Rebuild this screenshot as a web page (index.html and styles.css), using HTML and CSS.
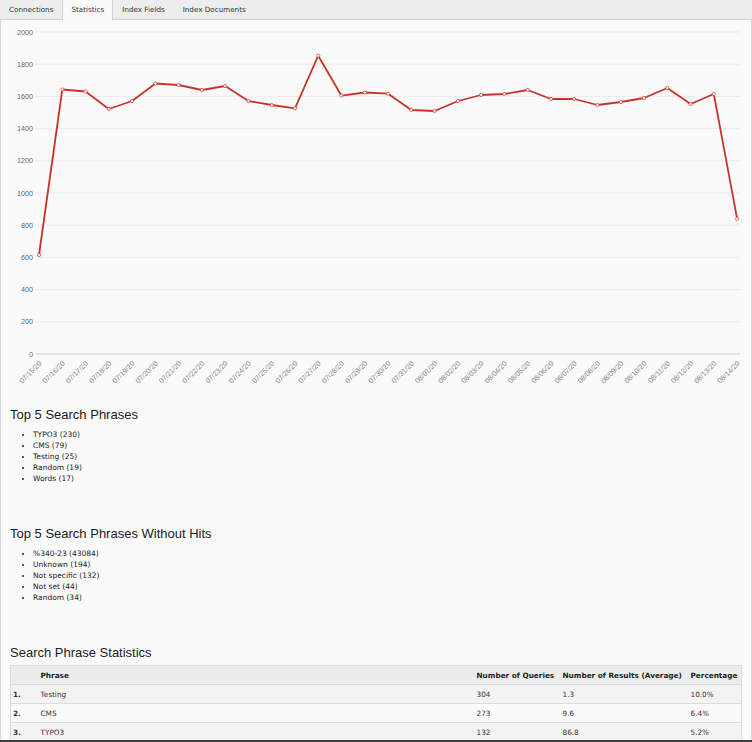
FILE: index.html
```html
<!DOCTYPE html>
<html>
<head>
<meta charset="utf-8">
<link rel="stylesheet" href="styles.css">
</head>
<body>
<div class="tabs">
  <span class="tab">Connections</span>
  <span class="tab active">Statistics</span>
  <span class="tab">Index Fields</span>
  <span class="tab">Index Documents</span>
</div>
<div class="panel">
  <svg class="chart" width="750" height="380" viewBox="1 20 750 380" xmlns="http://www.w3.org/2000/svg">
    <g class="grid">
      <line x1="36" y1="32" x2="740" y2="32"/>
      <line x1="36" y1="64.2" x2="740" y2="64.2"/>
      <line x1="36" y1="96.4" x2="740" y2="96.4"/>
      <line x1="36" y1="128.6" x2="740" y2="128.6"/>
      <line x1="36" y1="160.8" x2="740" y2="160.8"/>
      <line x1="36" y1="193" x2="740" y2="193"/>
      <line x1="36" y1="225.2" x2="740" y2="225.2"/>
      <line x1="36" y1="257.4" x2="740" y2="257.4"/>
      <line x1="36" y1="289.6" x2="740" y2="289.6"/>
      <line x1="36" y1="321.8" x2="740" y2="321.8"/>
    </g>
    <line class="axis" x1="36" y1="354" x2="740" y2="354"/>
    <g class="ylab">
      <text x="33" y="34.5">2000</text>
      <text x="33" y="66.7">1800</text>
      <text x="33" y="98.9">1600</text>
      <text x="33" y="131.1">1400</text>
      <text x="33" y="163.3">1200</text>
      <text x="33" y="195.5">1000</text>
      <text x="33" y="227.7">800</text>
      <text x="33" y="259.9">600</text>
      <text x="33" y="292.1">400</text>
      <text x="33" y="324.3">200</text>
      <text x="33" y="356.5">0</text>
    </g>
    <g class="xlab">
      <text transform="translate(42,364) rotate(-45)">07/15/20</text>
      <text transform="translate(65.3,364) rotate(-45)">07/16/20</text>
      <text transform="translate(88.5,364) rotate(-45)">07/17/20</text>
      <text transform="translate(111.8,364) rotate(-45)">07/18/20</text>
      <text transform="translate(135.1,364) rotate(-45)">07/19/20</text>
      <text transform="translate(158.4,364) rotate(-45)">07/20/20</text>
      <text transform="translate(181.6,364) rotate(-45)">07/21/20</text>
      <text transform="translate(204.9,364) rotate(-45)">07/22/20</text>
      <text transform="translate(228.2,364) rotate(-45)">07/23/20</text>
      <text transform="translate(251.4,364) rotate(-45)">07/24/20</text>
      <text transform="translate(274.7,364) rotate(-45)">07/25/20</text>
      <text transform="translate(298,364) rotate(-45)">07/26/20</text>
      <text transform="translate(321.2,364) rotate(-45)">07/27/20</text>
      <text transform="translate(344.5,364) rotate(-45)">07/28/20</text>
      <text transform="translate(367.8,364) rotate(-45)">07/29/20</text>
      <text transform="translate(391.1,364) rotate(-45)">07/30/20</text>
      <text transform="translate(414.3,364) rotate(-45)">07/31/20</text>
      <text transform="translate(437.6,364) rotate(-45)">08/01/20</text>
      <text transform="translate(460.9,364) rotate(-45)">08/02/20</text>
      <text transform="translate(484.1,364) rotate(-45)">08/03/20</text>
      <text transform="translate(507.4,364) rotate(-45)">08/04/20</text>
      <text transform="translate(530.7,364) rotate(-45)">08/05/20</text>
      <text transform="translate(554,364) rotate(-45)">08/06/20</text>
      <text transform="translate(577.2,364) rotate(-45)">08/07/20</text>
      <text transform="translate(600.5,364) rotate(-45)">08/08/20</text>
      <text transform="translate(623.8,364) rotate(-45)">08/09/20</text>
      <text transform="translate(647,364) rotate(-45)">08/10/20</text>
      <text transform="translate(670.3,364) rotate(-45)">08/11/20</text>
      <text transform="translate(693.6,364) rotate(-45)">08/12/20</text>
      <text transform="translate(716.8,364) rotate(-45)">08/13/20</text>
      <text transform="translate(740.1,364) rotate(-45)">08/14/20</text>
    </g>
    <polyline class="series" points="39,255 62.3,89.5 85.5,91.5 108.8,109 132.1,101 155.4,83.5 178.6,85 201.9,90 225.2,86 248.4,101 271.7,105 295,108.3 318.2,55.7 341.5,95.7 364.8,92.5 388.1,93.7 411.3,110 434.6,111 457.9,101 481.1,95 504.4,94 527.7,90 551,99 574.2,99 597.5,105 620.8,102 644,98 667.3,88 690.6,104 713.8,94 737.1,218.7"/>
    <g class="dots">
      <circle cx="39" cy="255" r="1.6"/><circle cx="62.3" cy="89.5" r="1.6"/><circle cx="85.5" cy="91.5" r="1.6"/><circle cx="108.8" cy="109" r="1.6"/><circle cx="132.1" cy="101" r="1.6"/><circle cx="155.4" cy="83.5" r="1.6"/><circle cx="178.6" cy="85" r="1.6"/><circle cx="201.9" cy="90" r="1.6"/><circle cx="225.2" cy="86" r="1.6"/><circle cx="248.4" cy="101" r="1.6"/><circle cx="271.7" cy="105" r="1.6"/><circle cx="295" cy="108.3" r="1.6"/><circle cx="318.2" cy="55.7" r="1.6"/><circle cx="341.5" cy="95.7" r="1.6"/><circle cx="364.8" cy="92.5" r="1.6"/><circle cx="388.1" cy="93.7" r="1.6"/><circle cx="411.3" cy="110" r="1.6"/><circle cx="434.6" cy="111" r="1.6"/><circle cx="457.9" cy="101" r="1.6"/><circle cx="481.1" cy="95" r="1.6"/><circle cx="504.4" cy="94" r="1.6"/><circle cx="527.7" cy="90" r="1.6"/><circle cx="551" cy="99" r="1.6"/><circle cx="574.2" cy="99" r="1.6"/><circle cx="597.5" cy="105" r="1.6"/><circle cx="620.8" cy="102" r="1.6"/><circle cx="644" cy="98" r="1.6"/><circle cx="667.3" cy="88" r="1.6"/><circle cx="690.6" cy="104" r="1.6"/><circle cx="713.8" cy="94" r="1.6"/><circle cx="737.1" cy="218.7" r="1.6"/>
    </g>
  </svg>
  <div class="content">
    <h3 class="first">Top 5 Search Phrases</h3>
    <ul>
      <li>TYPO3 (230)</li>
      <li>CMS (79)</li>
      <li>Testing (25)</li>
      <li>Random (19)</li>
      <li>Words (17)</li>
    </ul>
    <h3>Top 5 Search Phrases Without Hits</h3>
    <ul>
      <li>%340-23 (43084)</li>
      <li>Unknown (194)</li>
      <li>Not specific (132)</li>
      <li>Not set (44)</li>
      <li>Random (34)</li>
    </ul>
    <h3>Search Phrase Statistics</h3>
    <table class="stats">
      <colgroup>
        <col class="c-num"><col class="c-phrase"><col class="c-q"><col class="c-r"><col class="c-p">
      </colgroup>
      <thead>
        <tr><th></th><th>Phrase</th><th>Number of Queries</th><th>Number of Results (Average)</th><th>Percentage</th></tr>
      </thead>
      <tbody>
        <tr><td class="num">1.</td><td>Testing</td><td>304</td><td>1.3</td><td>10.0%</td></tr>
        <tr><td class="num">2.</td><td>CMS</td><td>273</td><td>9.6</td><td>6.4%</td></tr>
        <tr><td class="num">3.</td><td>TYPO3</td><td>132</td><td>86.8</td><td>5.2%</td></tr>
      </tbody>
    </table>
  </div>
</div>
<div class="frame-edge"></div>
</body>
</html>
```
FILE: styles.css
```css
html, body {
  margin: 0;
  padding: 0;
}
body {
  background: #fafafa;
  font-family: "DejaVu Sans", Verdana, sans-serif;
  color: #333;
  width: 752px;
  overflow: hidden;
}
.tabs {
  display: flex;
  height: 19px;
  background: #ededed;
  border-bottom: 1px solid #d2d2d2;
}
.tab {
  padding: 0 9px;
  line-height: 19px;
  font-size: 7.2px;
  color: #333;
}
.tab.active {
  background: #fafafa;
  border: 1px solid #d2d2d2;
  border-bottom-color: #fafafa;
  border-top: none;
  padding: 0 8px;
  height: 20px;
}
.panel {
  border-left: 1px solid #d8d8d8;
  border-right: 1px solid #d8d8d8;
  width: 750px;
  background: #fafafa;
  padding-bottom: 40px;
}
.chart {
  display: block;
}
.grid line {
  stroke: #ebebeb;
  stroke-width: 1;
}
.axis {
  stroke: #cfcfcf;
  stroke-width: 1;
}
.ylab text {
  font-family: "Liberation Sans", Arial, sans-serif;
  font-size: 7.2px;
  fill: #666;
  text-anchor: end;
}
.xlab text {
  font-family: "Liberation Sans", Arial, sans-serif;
  font-size: 7.2px;
  fill: #888;
  text-anchor: end;
}
.series {
  fill: none;
  stroke: #c8342b;
  stroke-width: 1.8;
  stroke-linejoin: round;
}
.dots circle {
  fill: #fff;
  stroke: #d0443a;
  stroke-width: 0.8;
}
.content {
  padding: 0 10px 0 9px;
}
h3 {
  font-family: "Liberation Sans", Arial, sans-serif;
  font-size: 13px;
  line-height: 16px;
  font-weight: normal;
  color: #1a1a1a;
  margin: 42px 0 0;
}
h3.first {
  margin-top: 7px;
}
ul {
  margin: 6px 0 0;
  padding-left: 23px;
  list-style: disc;
}
li {
  font-size: 7.5px;
  line-height: 11px;
  color: #222;
}
.stats {
  margin-top: 4px;
  width: 731px;
  table-layout: fixed;
  border-collapse: collapse;
  border: 1px solid #dcdcdc;
  font-size: 7.3px;
  color: #333;
}
.c-num { width: 26px; }
.c-phrase { width: 436px; }
.c-q { width: 86px; }
.c-r { width: 128px; }
.c-p { width: 55px; }
.stats th, .stats td {
  text-align: left;
  padding: 0 4px;
  height: 18px;
  border-bottom: 1px solid #dcdcdc;
  white-space: nowrap;
}
.stats th {
  font-weight: bold;
  background: #ececec;
  color: #222;
}
.stats td.num {
  font-weight: bold;
  padding-left: 2px;
}
.stats tbody tr:nth-child(odd) td {
  background: #f3f3f3;
}
.stats tbody tr:nth-child(even) td {
  background: #fbfbfb;
}
.frame-edge {
  position: fixed;
  left: 0;
  right: 0;
  bottom: 0;
  height: 2px;
  background: #3c3c3c;
}
```
